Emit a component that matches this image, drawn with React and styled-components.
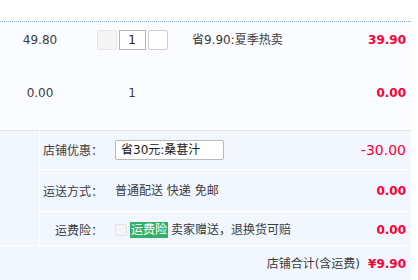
import React from 'react';
import styled, { createGlobalStyle } from 'styled-components';

const GlobalStyle = createGlobalStyle`
  body {
    margin: 0;
    background: #fff;
    font-family: 'DejaVu Sans', 'Noto Sans CJK SC', sans-serif;
    font-size: 12px;
    color: #3c3c3c;
  }
`;

const Wrap = styled.div`
  width: 411px;
  padding-top: 21px;
`;

const ItemList = styled.div`
  background: #fbfcff;
  border-top: 1px dotted #7ea6e6;
  border-bottom: 1px dotted #cfcfcf;
  padding-bottom: 2px;
`;

const ItemRow = styled.div`
  display: flex;
  align-items: flex-start;
  height: 53px;
  padding-top: 8px;
  box-sizing: border-box;
  line-height: 20px;
`;

const PriceCell = styled.div`
  width: 80px;
  text-align: center;
`;

const QtyCell = styled.div`
  width: 88px;
  margin-left: 8px;
  display: flex;
  justify-content: center;
`;

const QtyBtn = styled.div`
  width: 20px;
  height: 20px;
  box-sizing: border-box;
  border: 1px solid ${p => (p.$off ? '#e6e6e6' : '#cfcfcf')};
  background: ${p => (p.$off ? '#f5f5f5' : '#fff')};
  border-radius: 2px;
`;

const QtyInput = styled.div`
  width: 27px;
  height: 20px;
  margin: 0 2px;
  box-sizing: border-box;
  border: 1px solid #b5b5b5;
  background: #fff;
  text-align: center;
  line-height: 18px;
  color: #222;
`;

const PromoCell = styled.div`
  flex: 1;
  padding-left: 16px;
`;

const Amount = styled.div`
  width: 80px;
  padding-right: 5px;
  text-align: right;
  color: #ff0036;
  font-weight: ${p => (p.$light ? 400 : 700)};
  font-size: ${p => (p.$light ? 14 : 12)}px;
`;

const Summary = styled.div`
  display: flex;
  background: #f2f7ff;
  border-bottom: 1px solid #fff;
`;

const Side = styled.div`
  width: 39px;
  border-right: 1px solid #fff;
`;

const Lines = styled.div`
  flex: 1;
`;

const Line = styled.div`
  display: flex;
  align-items: center;
  height: ${p => p.$h}px;
  padding-top: ${p => p.$pt || 0}px;
  box-sizing: border-box;
  border-bottom: ${p => (p.$last ? 'none' : '1px solid #fff')};
  line-height: 18px;
`;

const Label = styled.div`
  width: 63px;
  text-align: right;
  margin-right: 12px;
  white-space: nowrap;
  font-family: 'Noto Sans CJK SC', sans-serif;
`;

const Value = styled.div`
  flex: 1;
  display: flex;
  align-items: center;
  white-space: nowrap;
`;

const Select = styled.div`
  width: 109px;
  height: 20px;
  box-sizing: border-box;
  border: 1px solid #b9b9b9;
  border-radius: 2px;
  background: #fff;
  padding-left: 5px;
  line-height: 18px;
  color: #222;
`;

const Check = styled.span`
  width: 12px;
  height: 12px;
  box-sizing: border-box;
  border: 1px solid #e2e2e2;
  background: #f4f4f4;
  border-radius: 2px;
  margin-right: 3px;
`;

const Badge = styled.span`
  background: #33b06a;
  color: #fff;
  height: 16px;
  line-height: 16px;
  padding: 0 1px;
  margin-right: 3px;
`;

const Total = styled.div`
  display: flex;
  justify-content: flex-end;
  align-items: center;
  gap: 8px;
  height: 35px;
  padding-right: 5px;
  background: #f2f7ff;
  line-height: 18px;
`;

const TotalPrice = styled.span`
  color: #ff0036;
  font-weight: 700;
`;

export default function App() {
  return (
    <Wrap>
      <GlobalStyle />
      <ItemList>
        <ItemRow>
          <PriceCell>49.80</PriceCell>
          <QtyCell>
            <QtyBtn $off />
            <QtyInput>1</QtyInput>
            <QtyBtn />
          </QtyCell>
          <PromoCell>省9.90:夏季热卖</PromoCell>
          <Amount>39.90</Amount>
        </ItemRow>
        <ItemRow>
          <PriceCell>0.00</PriceCell>
          <QtyCell>1</QtyCell>
          <PromoCell />
          <Amount>0.00</Amount>
        </ItemRow>
      </ItemList>
      <Summary>
        <Side />
        <Lines>
          <Line $h={39}>
            <Label>店铺优惠：</Label>
            <Value>
              <Select>省30元:桑葚汁</Select>
            </Value>
            <Amount $light>-30.00</Amount>
          </Line>
          <Line $h={42}>
            <Label>运送方式：</Label>
            <Value>普通配送 快递 免邮</Value>
            <Amount>0.00</Amount>
          </Line>
          <Line $h={33} $pt={3} $last>
            <Label>运费险：</Label>
            <Value>
              <Check />
              <Badge>运费险</Badge>
              卖家赠送，退换货可赔
            </Value>
            <Amount>0.00</Amount>
          </Line>
        </Lines>
      </Summary>
      <Total>
        <span>店铺合计(含运费)</span>
        <TotalPrice>¥9.90</TotalPrice>
      </Total>
    </Wrap>
  );
}
